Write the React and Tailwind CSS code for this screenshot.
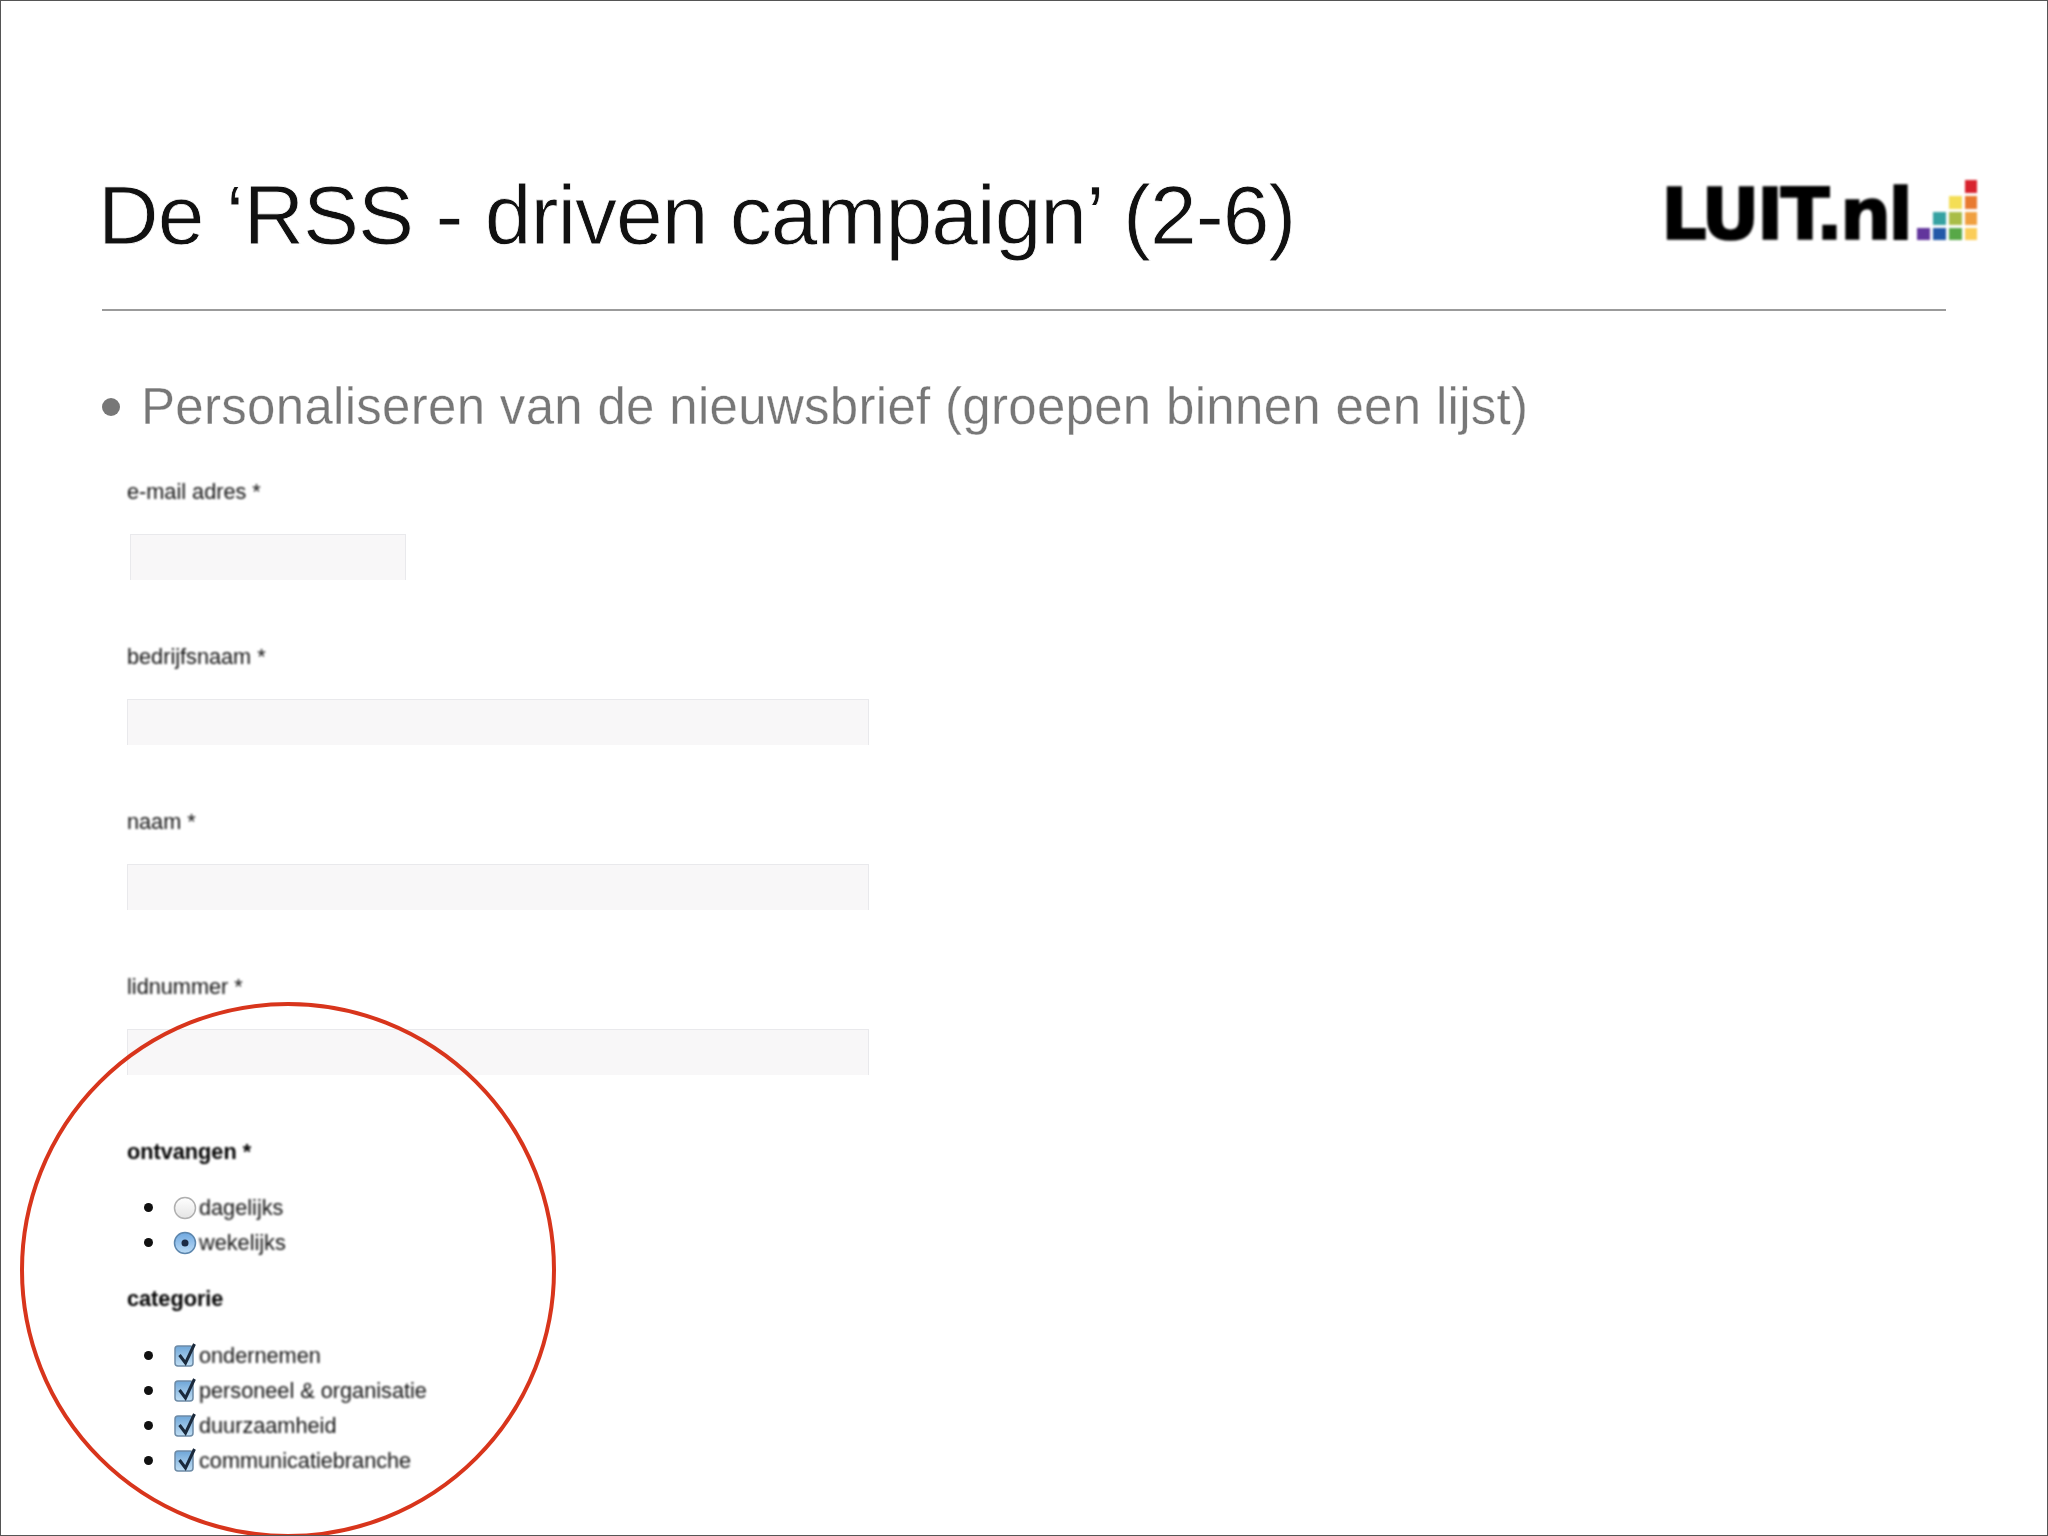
const F = "font-['Liberation_Sans',Arial,sans-serif]";

function Logo() {
  const squares = [
    [3, 0, '#d8232e'],
    [2, 1, '#f4de56'], [3, 1, '#e87a30'],
    [1, 2, '#35a2a2'], [2, 2, '#a9bd48'], [3, 2, '#f0a040'],
    [0, 3, '#62359c'], [1, 3, '#2258a8'], [2, 3, '#58a848'], [3, 3, '#fbcd58'],
  ];
  return (
    <div className="flex items-end gap-[7px] h-[62px] blur-[0.8px]">
      <span className="font-['DejaVu_Sans',sans-serif] font-bold text-[72px] leading-[52px] text-black tracking-[-3px] [-webkit-text-stroke:1.5px_#000]">LUIT.nl</span>
      <svg width="60" height="62" viewBox="0 0 60 62" className="shrink-0">
        {squares.map(([c, r, col], i) => (
          <rect key={i} x={c * 16} y={r * 16 + 2} width="13" height="13" fill={col} />
        ))}
      </svg>
    </div>
  );
}

function Field({ label, inputClass }) {
  return (
    <div className="h-[165px] flex flex-col">
      <div className="text-[21.7px] leading-[24px] h-[24px] text-[#111] blur-[0.8px]">{label} *</div>
      <div className={`mt-[30px] h-[46px] bg-[#f8f7f8] border border-[#e9e9ec] border-b-0 ${inputClass}`} />
    </div>
  );
}

function Radio({ on }) {
  return (
    <svg width="24" height="24" viewBox="0 0 24 24" className="shrink-0 blur-[0.7px]">
      <defs>
        <linearGradient id="rb" x1="0" y1="0" x2="0" y2="1">
          <stop offset="0" stopColor="#6fa8e0" />
          <stop offset="1" stopColor="#bcdcf6" />
        </linearGradient>
        <linearGradient id="rg" x1="0" y1="0" x2="0" y2="1">
          <stop offset="0" stopColor="#ffffff" />
          <stop offset="1" stopColor="#e4e4e4" />
        </linearGradient>
      </defs>
      <circle cx="12" cy="12" r="10.5" fill={on ? 'url(#rb)' : 'url(#rg)'} stroke={on ? '#5c86ad' : '#b0b0b0'} strokeWidth="1.5" />
      {on && <circle cx="12" cy="12" r="3.5" fill="#1c2b45" />}
    </svg>
  );
}

function Check() {
  return (
    <svg width="24" height="26" viewBox="0 0 24 26" className="shrink-0 blur-[0.6px]">
      <defs>
        <linearGradient id="cb" x1="0" y1="0" x2="0" y2="1">
          <stop offset="0" stopColor="#6ea6d8" />
          <stop offset="1" stopColor="#c0def4" />
        </linearGradient>
      </defs>
      <rect x="2" y="3" width="18" height="20" rx="3" fill="url(#cb)" stroke="#6d8ba6" strokeWidth="1.5" />
      <path d="M6.5 12 L12.5 20 L21.5 1" fill="none" stroke="#1b2a3c" strokeWidth="3" />
    </svg>
  );
}

function Item({ children, text }) {
  return (
    <li className="flex items-center h-[35px]">
      <span className="w-[9px] h-[9px] rounded-full bg-[#111] ml-[17px] mr-[21px] shrink-0 blur-[0.5px]" />
      <span className="w-[26px] flex justify-start shrink-0 -ml-[1px]">{children}</span>
      <span className="text-[21.7px] leading-[24px] text-[#111] blur-[0.8px]">{text}</span>
    </li>
  );
}

export default function App() {
  return (
    <div className={`${F} relative w-[2048px] h-[1536px] bg-white border border-[#555] overflow-hidden`}>
      <header className="flex items-start justify-between pl-[97px] pr-[70px] pt-[164px] h-[308px]">
        <h1 className="text-[84px] leading-[100px] font-normal text-[#111] whitespace-nowrap tracking-[-1px] [-webkit-text-stroke:0.8px_#fff]">De ‘RSS - driven campaign’ (2-6)</h1>
        <div className="pt-[13px]"><Logo /></div>
      </header>
      <div className="ml-[101px] w-[1844px] h-[2px] bg-[#9b9b9b]" />
      <div className="flex items-center ml-[101px] mt-[67px] h-[58px]">
        <span className="w-[18px] h-[18px] rounded-full bg-[#777] mr-[21px]" />
        <span className="text-[51px] leading-[58px] text-[#777] whitespace-nowrap tracking-[0.3px] [-webkit-text-stroke:0.3px_#fff]">Personaliseren van de nieuwsbrief (groepen binnen een lijst)</span>
      </div>
      <main className="ml-[126px] mt-[44px]">
        <Field label="e-mail adres" inputClass="w-[276px] ml-[3px]" />
        <Field label="bedrijfsnaam" inputClass="w-[742px]" />
        <Field label="naam" inputClass="w-[742px]" />
        <Field label="lidnummer" inputClass="w-[742px]" />
        <div className="text-[21.7px] leading-[24px] font-bold text-[#000] blur-[0.8px]">ontvangen *</div>
        <ul className="mt-[26px]">
          <Item text="dagelijks"><Radio /></Item>
          <Item text="wekelijks"><Radio on /></Item>
        </ul>
        <div className="mt-[27px] text-[21.7px] leading-[24px] font-bold text-[#000] blur-[0.8px]">categorie</div>
        <ul className="mt-[27px]">
          <Item text="ondernemen"><Check /></Item>
          <Item text="personeel & organisatie"><Check /></Item>
          <Item text="duurzaamheid"><Check /></Item>
          <Item text="communicatiebranche"><Check /></Item>
        </ul>
      </main>
      <div className="absolute left-[19px] top-[1001px] w-[536px] h-[536px] rounded-full border-[4px] border-[#d8351c]" />
    </div>
  );
}
